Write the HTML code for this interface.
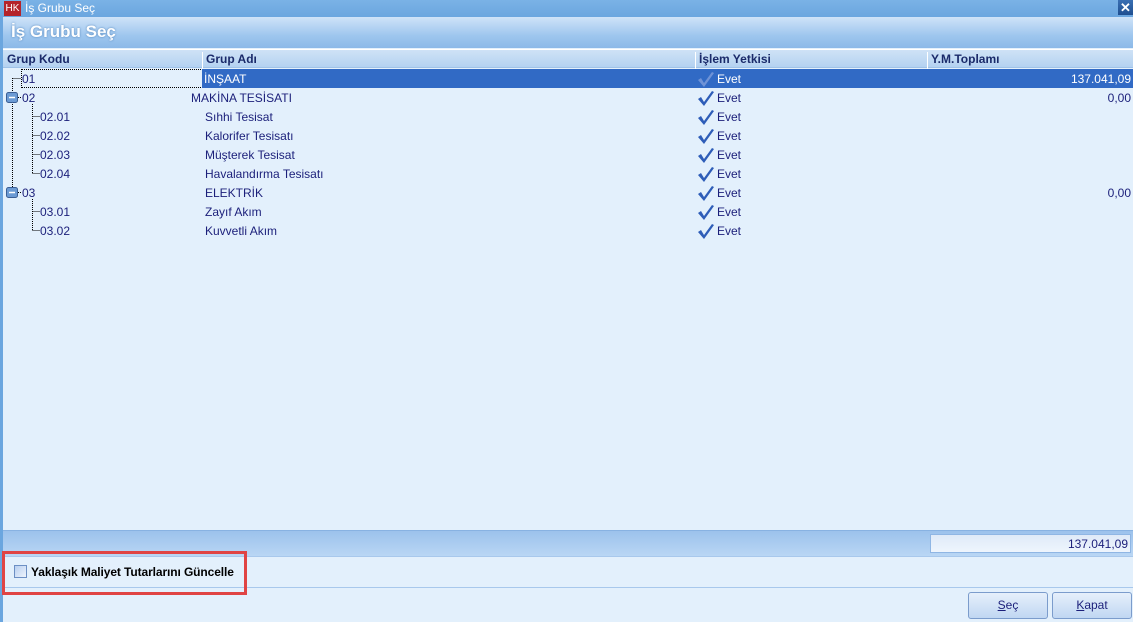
<!DOCTYPE html>
<html><head><meta charset="utf-8">
<style>
*{margin:0;padding:0;box-sizing:border-box}
body{width:1133px;height:622px;overflow:hidden;background:#e3f0fc;font-family:"Liberation Sans",sans-serif;font-size:12px;color:#1b1f7a;position:relative}
.abs{position:absolute}
.title{left:0;top:0;width:1133px;height:17px;background:linear-gradient(#7ab2e6,#6ba6df);color:#fff;font-size:12px}
.hdr{left:0;top:17px;width:1133px;height:31px;background:linear-gradient(#cfe3f8,#9ec6ee 60%,#8cb9e8);border-left:3px solid #6ba6df}
.hdr span{position:absolute;left:8px;top:5px;font-size:17px;font-weight:bold;color:#fff;text-shadow:0 0 2px #4a7fb8}
.cols{left:3px;top:49px;width:1130px;height:19px;background:linear-gradient(#cfe2f6,#b4d2f1);border-top:1px solid #fff;border-bottom:1px solid #9fc2e8}
.cols div{position:absolute;top:2px;font-weight:bold;color:#1a2a6a;font-size:12px;height:17px;border-left:1px solid #fff}
.row{left:3px;width:1130px;height:19px;line-height:19px}
.row span{position:absolute;top:1px}
.sel{background:#316ac5;color:#fff}
.left{left:0;top:17px;width:3px;height:605px;background:#6ba6df}
svg{position:absolute}
</style></head><body>
<div class="abs title">
 <div class="abs" style="left:4px;top:1px;width:17px;height:15px;background:#b4232a;color:#fff;font-size:10px;line-height:15px;text-align:center">HK</div>
 <div class="abs" style="left:25px;top:1px">İş Grubu Seç</div>
 <div class="abs" style="left:1118px;top:0;width:15px;height:15px;background:linear-gradient(#3a6fb3,#1f4f90);color:#fff;font-weight:bold;font-size:13px;text-align:center;line-height:15px">✕</div>
</div>
<div class="abs hdr"><span>İş Grubu Seç</span></div>
<div class="abs left"></div>
<div class="abs cols">
 <div style="left:0;border:none;padding-left:4px">Grup Kodu</div>
 <div style="left:199px;padding-left:3px">Grup Adı</div>
 <div style="left:692px;padding-left:3px">İşlem Yetkisi</div>
 <div style="left:924px;padding-left:3px">Y.M.Toplamı</div>
</div>
<svg width="60" height="170" style="left:0;top:68px">
 <g stroke="#000" stroke-dasharray="1,1" fill="none">
  <line x1="12.5" y1="10" x2="12.5" y2="120"/>
  <line x1="12.5" y1="10.5" x2="21" y2="10.5"/>
  <line x1="32.5" y1="36" x2="32.5" y2="106"/>
  <line x1="32.5" y1="48.5" x2="40" y2="48.5"/>
  <line x1="32.5" y1="67.5" x2="40" y2="67.5"/>
  <line x1="32.5" y1="86.5" x2="40" y2="86.5"/>
  <line x1="32.5" y1="105.5" x2="40" y2="105.5"/>
  <line x1="32.5" y1="131" x2="32.5" y2="163"/>
  <line x1="32.5" y1="143.5" x2="40" y2="143.5"/>
  <line x1="32.5" y1="162.5" x2="40" y2="162.5"/>
  <line x1="18" y1="29.5" x2="21" y2="29.5"/>
  <line x1="18" y1="124.5" x2="21" y2="124.5"/>
 </g>
 <rect x="6.5" y="24.5" width="11" height="10" rx="2" fill="#6c9bd4" stroke="#3b5f95"/>
 <line x1="9" y1="29.5" x2="15" y2="29.5" stroke="#fff" stroke-width="1.5"/>
 <rect x="6.5" y="119.5" width="11" height="10" rx="2" fill="#6c9bd4" stroke="#3b5f95"/>
 <line x1="9" y1="124.5" x2="15" y2="124.5" stroke="#fff" stroke-width="1.5"/>
</svg>
<div class="abs row" style="top:69px">
 <div class="abs" style="left:18px;top:0;width:182px;height:19px;border:1px dotted #000"></div>
 <div class="abs sel" style="left:199px;top:0;width:931px;height:19px"></div>
 <span style="left:19px">01</span><span style="left:201px;color:#fff">İNŞAAT</span><span style="left:714px;color:#fff">Evet</span><span style="right:2px;color:#fff">137.041,09</span>
</div>
<div class="abs row" style="top:88px"><span style="left:19px">02</span><span style="left:188px">MAKİNA TESİSATI</span><span style="left:714px">Evet</span><span style="right:2px">0,00</span></div>
<div class="abs row" style="top:107px"><span style="left:37px">02.01</span><span style="left:202px">Sıhhi Tesisat</span><span style="left:714px">Evet</span></div>
<div class="abs row" style="top:126px"><span style="left:37px">02.02</span><span style="left:202px">Kalorifer Tesisatı</span><span style="left:714px">Evet</span></div>
<div class="abs row" style="top:145px"><span style="left:37px">02.03</span><span style="left:202px">Müşterek Tesisat</span><span style="left:714px">Evet</span></div>
<div class="abs row" style="top:164px"><span style="left:37px">02.04</span><span style="left:202px">Havalandırma Tesisatı</span><span style="left:714px">Evet</span></div>
<div class="abs row" style="top:183px"><span style="left:19px">03</span><span style="left:202px">ELEKTRİK</span><span style="left:714px">Evet</span><span style="right:2px">0,00</span></div>
<div class="abs row" style="top:202px"><span style="left:37px">03.01</span><span style="left:202px">Zayıf Akım</span><span style="left:714px">Evet</span></div>
<div class="abs row" style="top:221px"><span style="left:37px">03.02</span><span style="left:202px">Kuvvetli Akım</span><span style="left:714px">Evet</span></div>
<svg width="20" height="180" style="left:697px;top:70px">
 <g fill="#2e5db8">
  <path d="M1 10 L4 8 L7 13 L15 2 L17 3 L7 17 Z" fill="#6f93d6"/>
  <path d="M1 29 L4 27 L7 32 L15 21 L17 22 L7 36 Z"/>
  <path d="M1 48 L4 46 L7 51 L15 40 L17 41 L7 55 Z"/>
  <path d="M1 67 L4 65 L7 70 L15 59 L17 60 L7 74 Z"/>
  <path d="M1 86 L4 84 L7 89 L15 78 L17 79 L7 93 Z"/>
  <path d="M1 105 L4 103 L7 108 L15 97 L17 98 L7 112 Z"/>
  <path d="M1 124 L4 122 L7 127 L15 116 L17 117 L7 131 Z"/>
  <path d="M1 143 L4 141 L7 146 L15 135 L17 136 L7 150 Z"/>
  <path d="M1 162 L4 160 L7 165 L15 154 L17 155 L7 169 Z"/>
 </g>
</svg>
<div class="abs" style="left:3px;top:530px;width:1130px;height:26px;background:linear-gradient(#9cc2ec,#b9d6f4);border-top:1px solid #88b2e2"></div>
<div class="abs" style="left:930px;top:534px;width:201px;height:19px;background:linear-gradient(#dfeaf8,#eef5fd);border:1px solid #8fb6e4;text-align:right;padding-right:2px;line-height:18px">137.041,09</div>
<div class="abs" style="left:3px;top:556px;width:1130px;height:1px;background:#a8c8ec"></div>
<div class="abs" style="left:3px;top:587px;width:1130px;height:1px;background:#a8c8ec"></div>
<div class="abs" style="left:14px;top:565px;width:13px;height:13px;border:1px solid #6c8fc4;background:linear-gradient(135deg,#b8cff0,#eef4fc)"></div>
<div class="abs" style="left:31px;top:565px;font-weight:bold;color:#000;font-size:12px;letter-spacing:-0.1px">Yaklaşık Maliyet Tutarlarını Güncelle</div>
<div class="abs" style="left:2px;top:551px;width:245px;height:44px;border:3px solid #e04444"></div>
<div class="abs" style="left:968px;top:592px;width:80px;height:27px;border:1px solid #7b9ccc;border-radius:3px;background:linear-gradient(#e6f0fb,#c0d7f2);text-align:center;line-height:25px;color:#1b1f7a"><u>S</u>eç</div>
<div class="abs" style="left:1052px;top:592px;width:80px;height:27px;border:1px solid #7b9ccc;border-radius:3px;background:linear-gradient(#e6f0fb,#c0d7f2);text-align:center;line-height:25px;color:#1b1f7a"><u>K</u>apat</div>
</body></html>
